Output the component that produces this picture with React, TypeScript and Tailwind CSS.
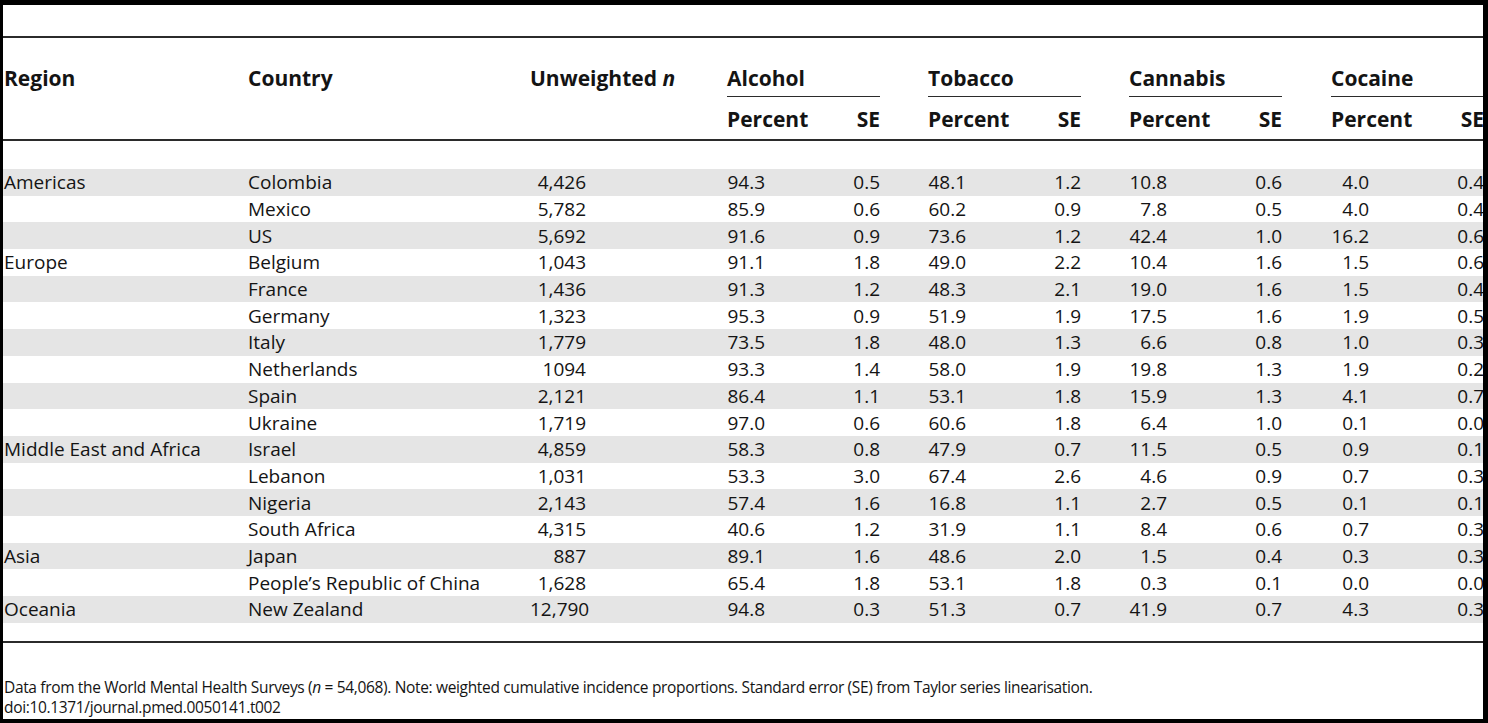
const rows = [
  ["Americas", "Colombia", "4,426", "94.3", "0.5", "48.1", "1.2", "10.8", "0.6", "4.0", "0.4"],
  ["", "Mexico", "5,782", "85.9", "0.6", "60.2", "0.9", "7.8", "0.5", "4.0", "0.4"],
  ["", "US", "5,692", "91.6", "0.9", "73.6", "1.2", "42.4", "1.0", "16.2", "0.6"],
  ["Europe", "Belgium", "1,043", "91.1", "1.8", "49.0", "2.2", "10.4", "1.6", "1.5", "0.6"],
  ["", "France", "1,436", "91.3", "1.2", "48.3", "2.1", "19.0", "1.6", "1.5", "0.4"],
  ["", "Germany", "1,323", "95.3", "0.9", "51.9", "1.9", "17.5", "1.6", "1.9", "0.5"],
  ["", "Italy", "1,779", "73.5", "1.8", "48.0", "1.3", "6.6", "0.8", "1.0", "0.3"],
  ["", "Netherlands", "1094", "93.3", "1.4", "58.0", "1.9", "19.8", "1.3", "1.9", "0.2"],
  ["", "Spain", "2,121", "86.4", "1.1", "53.1", "1.8", "15.9", "1.3", "4.1", "0.7"],
  ["", "Ukraine", "1,719", "97.0", "0.6", "60.6", "1.8", "6.4", "1.0", "0.1", "0.0"],
  ["Middle East and Africa", "Israel", "4,859", "58.3", "0.8", "47.9", "0.7", "11.5", "0.5", "0.9", "0.1"],
  ["", "Lebanon", "1,031", "53.3", "3.0", "67.4", "2.6", "4.6", "0.9", "0.7", "0.3"],
  ["", "Nigeria", "2,143", "57.4", "1.6", "16.8", "1.1", "2.7", "0.5", "0.1", "0.1"],
  ["", "South Africa", "4,315", "40.6", "1.2", "31.9", "1.1", "8.4", "0.6", "0.7", "0.3"],
  ["Asia", "Japan", "887", "89.1", "1.6", "48.6", "2.0", "1.5", "0.4", "0.3", "0.3"],
  ["", "People\u2019s Republic of China", "1,628", "65.4", "1.8", "53.1", "1.8", "0.3", "0.1", "0.0", "0.0"],
  ["Oceania", "New Zealand", "12,790", "94.8", "0.3", "51.3", "0.7", "41.9", "0.7", "4.3", "0.3"],
];

const groups = ["Alcohol", "Tobacco", "Cannabis", "Cocaine"];
const groupWidths = ["w-[201px]", "w-[201px]", "w-[202px]", "w-[201px]"];

function Pair({ pct, se, width }: { pct: string; se: string; width: string }) {
  return (
    <div className={`${width} shrink-0 flex`}>
      <div className="w-[38px] text-right">{pct}</div>
      <div className="w-[115px] text-right">{se}</div>
    </div>
  );
}

export default function App() {
  return (
    <div
      className="h-[723px] w-full overflow-hidden border-black border-t-[5px] border-l-[3px] border-r-[5px] border-b-[4px] bg-white text-[#141414] text-[18px]"
      style={{ fontFamily: '"Open Sans", "Liberation Sans", sans-serif' }}
    >
      <div className="w-[1480px] overflow-hidden">
        <div className="h-[31px]" />
        <div className="h-[2px] bg-[#2b2b2b]" />

        {/* Header */}
        <div className="font-bold text-[21px]">
          <div className="flex h-[59px] pl-[1px]">
            <div className="w-[244px] shrink-0 pt-[27px] leading-[26px]">Region</div>
            <div className="w-[282px] shrink-0 pt-[27px] leading-[26px]">Country</div>
            <div className="w-[197px] shrink-0 pt-[27px] leading-[26px] whitespace-nowrap">
              Unweighted <span className="italic">n</span>
            </div>
            {groups.map((g, i) => (
              <div key={g} className={`${groupWidths[i]} shrink-0 flex flex-col`}>
                <div className="pt-[27px] leading-[26px] flex-1">{g}</div>
                <div className={`h-[1px] bg-[#2b2b2b] ${i === 3 ? "w-[200px]" : "w-[153px]"}`} />
              </div>
            ))}
          </div>
          <div className="flex h-[42px] pl-[1px] pt-[9px] leading-[26px]">
            <div className="w-[723px] shrink-0" />
            {groups.map((g, i) => (
              <div key={g} className={`${groupWidths[i]} shrink-0 flex`}>
                <div className="w-[113px]">Percent</div>
                <div className="w-[40px] text-right">SE</div>
              </div>
            ))}
          </div>
        </div>

        <div className="h-[2px] bg-[#2b2b2b]" />
        <div className="h-[28px]" />

        {/* Body */}
        <div className="text-[19px]">
          {rows.map((r, idx) => (
            <div
              key={r[1]}
              className={`flex h-[26.7px] items-center pl-[1px] leading-6 ${idx % 2 === 0 ? "bg-[#e5e5e5]" : ""}`}
            >
              <div className="w-[244px] shrink-0 whitespace-nowrap">{r[0]}</div>
              <div className="w-[282px] shrink-0 whitespace-nowrap">{r[1]}</div>
              <div className="w-[197px] shrink-0">
                <div className="w-[56px] text-right">{r[2]}</div>
              </div>
              <Pair pct={r[3]} se={r[4]} width="w-[201px]" />
              <Pair pct={r[5]} se={r[6]} width="w-[201px]" />
              <Pair pct={r[7]} se={r[8]} width="w-[202px]" />
              <Pair pct={r[9]} se={r[10]} width="w-[201px]" />
            </div>
          ))}
        </div>

        <div className="h-[18px]" />
        <div className="h-[2px] bg-[#2b2b2b]" />
        <div className="h-[34px]" />

        {/* Footnote */}
        <div className="pl-[1px] text-[15.5px] tracking-[-0.34px] leading-5 whitespace-nowrap">
          <p>
            Data from the World Mental Health Surveys (<span className="italic">n</span> = 54,068). Note: weighted
            cumulative incidence proportions. Standard error (SE) from Taylor series linearisation.
          </p>
          <p>doi:10.1371/journal.pmed.0050141.t002</p>
        </div>
      </div>
    </div>
  );
}
